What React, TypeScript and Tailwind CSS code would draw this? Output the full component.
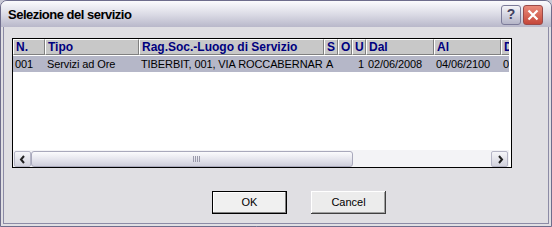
import React from "react";

type Col = { key: string; label: string; w: number; align?: "right" };

const cols: Col[] = [
  { key: "n", label: "N.", w: 32 },
  { key: "tipo", label: "Tipo", w: 94 },
  { key: "rag", label: "Rag.Soc.-Luogo di Servizio", w: 185 },
  { key: "s", label: "S", w: 14 },
  { key: "o", label: "O", w: 14 },
  { key: "u", label: "U", w: 14, align: "right" },
  { key: "dal", label: "Dal", w: 68 },
  { key: "al", label: "Al", w: 67 },
  { key: "d", label: "D", w: 40 },
];

const row: Record<string, string> = {
  n: "001",
  tipo: "Servizi ad Ore",
  rag: "TIBERBIT, 001, VIA ROCCABERNAR",
  s: "A",
  o: "",
  u: "1",
  dal: "02/06/2008",
  al: "04/06/2100",
  d: "0",
};

function ArrowLeft() {
  return (
    <svg width="8" height="9" viewBox="0 0 8 9">
      <path d="M5 1 L2 4.5 L5 8" stroke="#222" strokeWidth="2" fill="none" />
    </svg>
  );
}

function ArrowRight() {
  return (
    <svg width="8" height="9" viewBox="0 0 8 9">
      <path d="M3 1 L6 4.5 L3 8" stroke="#222" strokeWidth="2" fill="none" />
    </svg>
  );
}

export default function App() {
  return (
    <div className="w-[552px] h-[227px] bg-[#c9c9d6] font-['Liberation_Sans',sans-serif]">
      <div className="w-full h-full flex flex-col rounded-t-[7px] border border-[#6e6d8c] bg-[#e0dfe3] overflow-hidden">
        {/* title bar */}
        <div className="h-[26px] shrink-0 flex items-center justify-between pl-[7px] pr-[8px] bg-gradient-to-b from-[#fbfbfd] via-[#dcdce6] to-[#b9b8ca]">
          <div className="text-[13px] font-bold text-black tracking-[-0.5px] mt-[1px]">Selezione del servizio</div>
          <div className="flex gap-[2px] mt-[1px]">
            <div className="w-[20px] h-[20px] rounded-[3px] border border-[#7c7b99] bg-gradient-to-b from-[#f4f4f8] to-[#b5b5c8] flex items-center justify-center text-[14px] font-bold text-[#404060]">
              ?
            </div>
            <div className="w-[20px] h-[20px] rounded-[3px] border border-[#9a4a48] bg-gradient-to-b from-[#e98a7a] to-[#c5463a] flex items-center justify-center">
              <svg width="12" height="12" viewBox="0 0 12 12">
                <path d="M1.5 1.5 L10.5 10.5 M10.5 1.5 L1.5 10.5" stroke="#fff" strokeWidth="2.2" />
              </svg>
            </div>
          </div>
        </div>

        {/* body */}
        <div className="flex-1 mx-[2px] mb-[2px] border border-[#8c8ba6] border-t-0 flex flex-col">
          <div className="pl-[8px] pt-[11px]">
            <div className="w-[500px] h-[130px] border border-black flex flex-col bg-white">
              <div className="flex-1 w-[496px] overflow-hidden flex flex-col">
                {/* header */}
                <div className="flex h-[16px] shrink-0">
                  {cols.map((c) => (
                    <div
                      key={c.key}
                      style={{ width: c.w, minWidth: c.w }}
                      className="h-[16px] bg-[#c8c8c8] border-t border-l border-white border-r border-b border-r-[#808080] border-b-[#808080] text-[12px] leading-[14px] font-bold text-[#00007f] pl-[2px] overflow-hidden whitespace-nowrap"
                    >
                      {c.label}
                    </div>
                  ))}
                </div>
                {/* row */}
                <div className="flex h-[16px] mt-[1px] shrink-0 bg-[#b5b7c8]">
                  {cols.map((c) => (
                    <div
                      key={c.key}
                      style={{ width: c.w, minWidth: c.w }}
                      className={
                        "text-[11px] leading-[16px] text-black px-[2px] overflow-hidden whitespace-nowrap tracking-[-0.1px] " +
                        (c.align === "right" ? "text-right" : "")
                      }
                    >
                      {row[c.key]}
                    </div>
                  ))}
                </div>
                <div className="flex-1" />
                {/* horizontal scrollbar */}
                <div className="h-[17px] shrink-0 flex bg-[#f3f3f6] pt-[1px]">
                  <div className="w-[17px] h-[16px] ml-[1px] rounded-[2px] border border-[#b5b5c6] bg-gradient-to-b from-[#f6f6f9] to-[#d2d2dd] flex items-center justify-center">
                    <ArrowLeft />
                  </div>
                  <div className="w-[322px] h-[16px] rounded-[3px] border border-[#a9a9bc] bg-gradient-to-b from-[#fbfbfd] via-[#e6e6ee] to-[#cfcfdc] flex items-center justify-center">
                    <div className="flex gap-[1px] ml-[8px]">
                      <div className="w-[1px] h-[6px] bg-[#9a9aab]" />
                      <div className="w-[1px] h-[6px] bg-[#9a9aab]" />
                      <div className="w-[1px] h-[6px] bg-[#9a9aab]" />
                      <div className="w-[1px] h-[6px] bg-[#9a9aab]" />
                    </div>
                  </div>
                  <div className="flex-1" />
                  <div className="w-[17px] h-[16px] mr-[1px] rounded-[2px] border border-[#b5b5c6] bg-gradient-to-b from-[#f6f6f9] to-[#d2d2dd] flex items-center justify-center">
                    <ArrowRight />
                  </div>
                </div>
              </div>
            </div>
          </div>

          {/* buttons */}
          <div className="flex pl-[208px] gap-[24px] mt-[23px]">
            <button className="w-[75px] h-[23px] border border-black bg-[#f0f0f0] text-[11px] text-black flex items-center justify-center shadow-[inset_-1px_-1px_0_#808080,inset_1px_1px_0_#fff]">
              OK
            </button>
            <button className="w-[75px] h-[23px] bg-[#ececec] text-[11px] text-black flex items-center justify-center shadow-[inset_-1px_-1px_0_#404040,inset_1px_1px_0_#fff,inset_-2px_-2px_0_#a0a0a0]">
              Cancel
            </button>
          </div>
        </div>
      </div>
    </div>
  );
}
